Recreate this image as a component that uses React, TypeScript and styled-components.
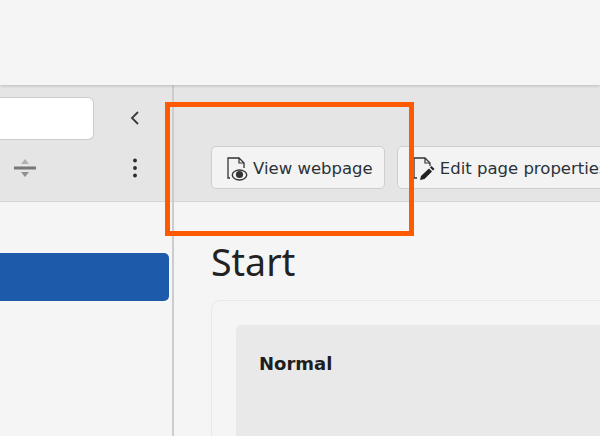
import React from "react";
import styled, { createGlobalStyle } from "styled-components";

const Global = createGlobalStyle`
  html, body { margin: 0; padding: 0; background: #f5f5f5; }
  body { width: 600px; height: 436px; overflow: hidden; font-family: "DejaVu Sans", sans-serif; }
`;

const Page = styled.div`
  position: relative;
  width: 600px;
  height: 436px;
  overflow: hidden;
  display: flex;
  flex-direction: column;
  background: #f5f5f5;
`;
const TopBar = styled.header`
  height: 85px;
  flex: none;
  background: #f5f5f5;
  box-shadow: 0 1px 3px rgba(0, 0, 0, 0.18);
  position: relative;
  z-index: 1;
`;
const Body = styled.div`
  flex: 1;
  display: flex;
  min-height: 0;
`;
const Sidebar = styled.aside`
  width: 172px;
  flex: none;
  border-right: 2px solid #cdcdcd;
  display: flex;
  flex-direction: column;
`;
const SideTools = styled.div`
  height: 117px;
  flex: none;
  box-sizing: border-box;
  padding-top: 12px;
  background: #e5e5e5;
  border-bottom: 1px solid #d6d6d6;
  display: flex;
  flex-direction: column;
  gap: 6px;
`;
const SideRow = styled.div`
  display: flex;
  align-items: center;
  height: 43px;
`;
const SearchBox = styled.div`
  width: 94px;
  height: 43px;
  box-sizing: border-box;
  background: #fff;
  border: 1px solid #cccccc;
  border-left: none;
  border-radius: 0 6px 6px 0;
`;
const Collapse = styled.div`
  margin-left: 34px;
  margin-top: -1px;
  width: 14px;
  display: flex;
  justify-content: center;
`;
const SortSlot = styled.div`
  width: 132px;
  padding-left: 14px;
  box-sizing: border-box;
  display: flex;
`;
const ActiveItem = styled.div`
  margin-top: 51px;
  width: 169px;
  height: 48px;
  background: #1d5aa9;
  border-radius: 0 5px 5px 0;
`;
const Main = styled.main`
  flex: 1;
  min-width: 0;
  display: flex;
  flex-direction: column;
`;
const ActionBar = styled.div`
  height: 117px;
  flex: none;
  box-sizing: border-box;
  padding: 61px 0 0 37px;
  background: #e5e5e5;
  border-bottom: 1px solid #d6d6d6;
  display: flex;
  gap: 12px;
  overflow: hidden;
`;
const ActionButton = styled.button`
  height: 43px;
  flex: none;
  box-sizing: border-box;
  padding: 2px 11px 0 14px;
  display: flex;
  align-items: center;
  gap: 3px;
  background: #f3f3f3;
  border: 1px solid #cecece;
  border-radius: 5px;
  color: #2a3238;
  font: 16.5px "DejaVu Sans", sans-serif;
  white-space: nowrap;
`;
const Content = styled.div`
  padding: 0 0 0 37px;
`;
const Title = styled.h1`
  margin: 34px 0 0;
  height: 64px;
  font: 400 37.5px/52px "Noto Sans", sans-serif;
  color: #222;
`;
const Card = styled.section`
  box-sizing: border-box;
  width: 500px;
  height: 200px;
  padding: 24px 0 0 24px;
  border: 1px solid #e8e8e8;
  border-radius: 9px;
`;
const Panel = styled.div`
  height: 200px;
  padding: 28px 23px;
  box-sizing: border-box;
  background: #e9e9e9;
  border-radius: 5px;
`;
const PanelTitle = styled.h2`
  margin: 0;
  font: 700 18px/22px "DejaVu Sans", sans-serif;
  color: #1e1e1e;
`;
const Highlight = styled.div`
  position: absolute;
  left: 165px;
  top: 102px;
  width: 249px;
  height: 134px;
  box-sizing: border-box;
  border: 5px solid #ff5a00;
  z-index: 2;
`;

const Chevron = () => (
  <svg width="10" height="16" viewBox="0 0 10 16" fill="none" stroke="#3a3a3a" strokeWidth="1.8">
    <path d="M8 2 L2 8 L8 14" />
  </svg>
);
const SortIcon = () => (
  <svg width="22" height="18" viewBox="0 0 22 18">
    <path d="M11 0 L15 5 H7 Z" fill="#b0b0b0" />
    <rect x="0" y="7.5" width="22" height="3" fill="#777" />
    <path d="M7 13 H15 L11 18 Z" fill="#8f8f8f" />
  </svg>
);
const Kebab = () => (
  <svg width="6" height="20" viewBox="0 0 6 20" fill="#2b2b2b">
    <circle cx="3" cy="2.5" r="1.9" />
    <circle cx="3" cy="10" r="1.9" />
    <circle cx="3" cy="17.5" r="1.9" />
  </svg>
);
const PageEye = () => (
  <svg width="24" height="24" viewBox="0 0 24 24" fill="none">
    <path d="M4 21 H2 V1 H13 L18 6 V11" stroke="#333" strokeWidth="1.3" />
    <path d="M13 1 V6 H18" stroke="#333" strokeWidth="1.2" />
    <ellipse cx="13.5" cy="18" rx="7.2" ry="5" stroke="#333" strokeWidth="1.4" fill="#f3f3f3" />
    <circle cx="13.5" cy="17.5" r="3.6" fill="#333" />
  </svg>
);
const PagePencil = () => (
  <svg width="25" height="24" viewBox="0 0 25 24" fill="none">
    <path d="M5 21 H2 V1 H13 L18 6 V9" stroke="#333" strokeWidth="1.3" />
    <path d="M13 1 V6 H18" stroke="#333" strokeWidth="1.2" />
    <path d="M8 23 L9 19 L17 11.5 L20 14.5 L12.5 22 Z" fill="#222" />
    <path d="M18 10.5 L19.5 9 L22.5 12 L21 13.5 Z" fill="#222" />
  </svg>
);

export default function App() {
  return (
    <Page>
      <Global />
      <TopBar />
      <Body>
        <Sidebar>
          <SideTools>
            <SideRow>
              <SearchBox />
              <Collapse><Chevron /></Collapse>
            </SideRow>
            <SideRow>
              <SortSlot><SortIcon /></SortSlot>
              <Kebab />
            </SideRow>
          </SideTools>
          <ActiveItem />
        </Sidebar>
        <Main>
          <ActionBar>
            <ActionButton><PageEye />View webpage</ActionButton>
            <ActionButton><PagePencil />Edit page properties</ActionButton>
          </ActionBar>
          <Content>
            <Title>Start</Title>
            <Card>
              <Panel><PanelTitle>Normal</PanelTitle></Panel>
            </Card>
          </Content>
        </Main>
      </Body>
      <Highlight />
    </Page>
  );
}
